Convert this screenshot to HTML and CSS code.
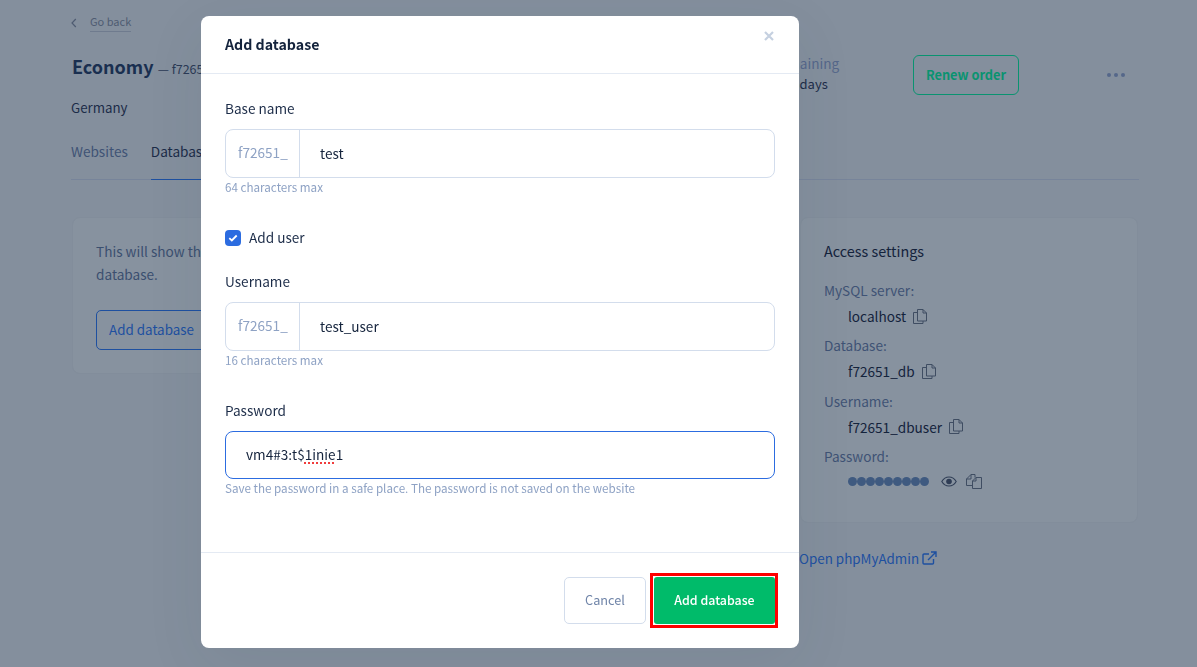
FILE: index.html
```html
<!DOCTYPE html>
<html lang="en">
<head>
<meta charset="utf-8">
<title>Add database</title>
<link rel="stylesheet" href="styles.css">
</head>
<body>
<div class="page">
  <a class="back"><svg class="back-icon" width="6" height="10" viewBox="0 0 6 10"><path d="M4.800 1 1 5l3.800 4" fill="none" stroke="#4f5c72" stroke-width="1.200"/></svg><span class="back-text">Go back</span></a>
  <header class="head">
    <div class="head-main">
      <h1 class="title">Economy <small class="title-sub">— f72651.hosting</small></h1>
      <div class="location">Germany</div>
    </div>
    <div class="remaining"><div class="remaining-label">Days remaining</div><div class="remaining-value">128 days</div></div>
    <button class="renew">Renew order</button>
    <div class="dots"><i></i><i></i><i></i></div>
  </header>
  <nav class="tabs"><span class="tab">Websites</span><span class="tab tab-active">Databases</span></nav>
  <div class="columns">
    <section class="card card-left">
      <p class="card-text">This will show the list of your databases. You have not created any<br>database.</p>
      <button class="outline-btn">Add database</button>
    </section>
    <aside class="side">
      <section class="card card-right">
        <h2 class="access-title">Access settings</h2>
        <div class="k">MySQL server:</div>
        <div class="v">localhost <svg class="copy" width="14" height="15" viewBox="0 0 14 15"><path d="M4.500 .5h5.500l3.500 3.500v8h-9zM10 .5V4h3.500M4.500 3.500H.5v11h9.500V12" fill="none" stroke="#3f4d62" stroke-width="1"/></svg></div>
        <div class="k">Database:</div>
        <div class="v">f72651_db <svg class="copy" width="14" height="15" viewBox="0 0 14 15"><path d="M4.500 .5h5.500l3.500 3.500v8h-9zM10 .5V4h3.500M4.500 3.500H.5v11h9.500V12" fill="none" stroke="#3f4d62" stroke-width="1"/></svg></div>
        <div class="k">Username:</div>
        <div class="v">f72651_dbuser <svg class="copy" width="14" height="15" viewBox="0 0 14 15"><path d="M4.500 .5h5.500l3.500 3.500v8h-9zM10 .5V4h3.500M4.500 3.500H.5v11h9.500V12" fill="none" stroke="#3f4d62" stroke-width="1"/></svg></div>
        <div class="k">Password:</div>
        <div class="v v-pass"><span class="pass-dots"><i></i><i></i><i></i><i></i><i></i><i></i><i></i><i></i><i></i></span>
          <svg class="eye" width="16" height="11" viewBox="0 0 16 11"><path d="M.8 5.500C2.500 2.500 5 1 8 1s5.500 1.500 7.200 4.500C13.500 8.500 11 10 8 10S2.500 8.500.8 5.500z" fill="none" stroke="#2f3d55" stroke-width="1.100"/><circle cx="8" cy="5.500" r="2.800" fill="#2f3d55"/></svg>
          <svg class="copy2" width="16" height="15" viewBox="0 0 16 15"><path d="M5 .5h4v3M5 .5.5 5v6.500h6M.5 5H5V.5M10 3.500 6.500 7v7.500h9v-11zM6.500 7H10V3.500" fill="none" stroke="#3f4d62" stroke-width="1"/></svg>
        </div>
      </section>
      <a class="pma">Open phpMyAdmin <svg width="15" height="14" viewBox="0 0 15 14"><path d="M11.500 8v4a1 1 0 0 1-1 1H2a1 1 0 0 1-1-1V4a1 1 0 0 1 1-1h5M6 9l7.500-7.500M9 1h5v5" fill="none" stroke="#1e50a0" stroke-width="1.400"/></svg></a>
    </aside>
  </div>
</div>

<div class="overlay">
  <div class="modal">
    <div class="modal-head"><h3 class="modal-title">Add database</h3><svg class="close" width="10" height="10" viewBox="0 0 10 10"><path d="M1 1l8 8M9 1 1 9" fill="none" stroke="#c5d0e0" stroke-width="2.200"/></svg></div>
    <div class="modal-body">
      <div class="label">Base name</div>
      <div class="field"><span class="prefix">f72651_</span><span class="value">test</span></div>
      <div class="hint">64 characters max</div>
      <label class="check"><span class="box"><svg width="10" height="8" viewBox="0 0 10 8"><path d="M1.300 4.200 3.800 6.500 8.700 1.500" fill="none" stroke="#fff" stroke-width="1.800"/></svg></span><span class="check-text">Add user</span></label>
      <div class="label">Username</div>
      <div class="field"><span class="prefix">f72651_</span><span class="value">test_user</span></div>
      <div class="hint">16 characters max</div>
      <div class="label label-pass">Password</div>
      <div class="field field-focus"><span class="value value-pass">vm4#3:t$<span class="typo">1inie</span>1</span></div>
      <div class="hint">Save the password in a safe place. The password is not saved on the website</div>
    </div>
    <div class="modal-foot">
      <button class="cancel">Cancel</button>
      <button class="submit">Add database</button>
    </div>
  </div>
</div>
</body>
</html>
```
FILE: styles.css
```css
* { box-sizing: border-box; }
html, body { margin: 0; height: 100%; overflow: hidden; }
body {
  background: #848f9d;
  font-family: "Noto Sans CJK SC", "Noto Sans", sans-serif;
  font-size: 13.6px;
  line-height: 20px;
  color: #1a2b47;
}
button { font: inherit; background: none; cursor: pointer; }

.page { padding: 13px 58px 0 71px; }
.back { display: flex; align-items: center; height: 19px; color: #4f5c72; font-size: 11px; }
.back-icon { margin-right: 13px; }
.back-text { border-bottom: 1px solid #6f7b8e; line-height: 17px; height: 19px; }

.head { display: flex; align-items: flex-start; margin-top: 23px; height: 76px; }
.head-main { width: 670px; padding-left: 1px; }
.title { margin: -1px 0 0; font-size: 18px; line-height: 24px; font-weight: 700; color: #1a2f50; }
.title-sub { font-size: 12.500px; font-weight: 400; color: #2b3a55; }
.location { margin: 17px 0 0 -1px; font-size: 13.300px; color: #1c2c48; }
.remaining { width: 172px; margin-top: -2px; }
.remaining-label { color: #55678a; line-height: 20px; }
.remaining-value { margin-top: 1px; padding-left: 34px; font-size: 13px; color: #1c2c48; }
.renew {
  width: 106px; height: 40px; padding: 0; border: 1px solid #0a9370; border-radius: 6px;
  color: #0a9370; font-weight: 600; font-size: 12.800px;
}
.dots { display: flex; gap: 3px; margin: 18px 0 0 88px; }
.dots i { width: 4px; height: 4px; border-radius: 50%; background: #55678a; }

.tabs { display: flex; gap: 23px; height: 45px; margin-top: 4px; border-bottom: 1px solid #77849a; }
.tab { color: #3f5375; height: 45px; padding-top: 6px; }
.tab-active { color: #1c2c48; border-bottom: 1px solid #1e50a0; }

.columns { display: flex; gap: 23px; margin-top: 37px; margin-left: 1px; align-items: flex-start; }
.card {
  background: #87929f;
  border: 1px solid #828d9b;
  border-radius: 8px;
}
.card-left { width: 705px; height: 157px; padding: 22px 23px; }
.card-text { margin: 0; line-height: 23px; color: #3b4f6f; }
.outline-btn {
  display: block; margin-top: 24px; width: 130px; height: 40px; text-align: left; padding: 0 12px 2px;
  border: 1px solid #1e50a0; border-radius: 5px; color: #1e50a0; font-size: 13.400px;
}
.side { width: 338px; }
.card-right { height: 306px; padding: 22px 23px; }
.access-title { margin: 0 0 18px; font-size: 14.400px; line-height: 22px; font-weight: 400; color: #14233c; }
.k { color: #3f5375; line-height: 20px; }
.v { display: flex; align-items: center; gap: 7px; height: 20px; margin: 6px 0 9.300px 24px; color: #14233c; }
.v-pass { gap: 10px; }
.pass-dots { display: flex; margin-right: 2px; }
.pass-dots i { width: 9px; height: 9px; border-radius: 50%; background: #3f5a80; }
.copy2 { margin-left: -1px; }
.pma { display: flex; align-items: center; gap: 3px; margin: 25px 0 0 -1px; font-size: 13.400px; color: #1e50a0; }

.overlay { position: fixed; inset: 0; padding: 16px 0 0 201px; }
.modal {
  width: 598px; height: 632px; display: flex; flex-direction: column;
  background: #fff; border-radius: 8px;
  box-shadow: 0 16px 60px rgba(40, 60, 80, .08);
}
.modal-head {
  display: flex; justify-content: space-between; align-items: flex-start;
  height: 58px; padding: 17px 25px 0 24px; border-bottom: 1px solid #e4eaf3;
}
.modal-title { margin: 0; font-size: 14.200px; line-height: 22px; font-weight: 600; color: #14233c; }
.close { margin-top: -2px; }
.modal-body { flex: 1; padding: 24px 24px 0; }
.label { line-height: 20px; color: #1c2c48; margin-bottom: 11px; }
.field { display: flex; align-items: center; height: 49px; border: 1px solid #d3ddec; border-radius: 8px; }
.prefix { width: 74px; height: 100%; padding-left: 12px; line-height: 45px; color: #8ea2c4; border-right: 1px solid #d3ddec; }
.value { padding: 0 0 2px 20px; color: #14233c; }
.field-focus { height: 48px; border-color: #2c6ce0; }
.typo { text-decoration: underline dotted #f03c3c 2px; text-underline-offset: 2px; }
.hint { font-size: 11.650px; line-height: 18px; color: #8ea2c4; }
.check { display: flex; align-items: center; gap: 8px; height: 20px; margin: 32px 0 23px; color: #1c2c48; }
.check-text { margin-top: -2px; }
.box { display: flex; align-items: center; justify-content: center; width: 16px; height: 16px; border-radius: 4px; background: #2c6ce0; }
.label-pass { margin-top: 31px; }
.modal-foot {
  display: flex; justify-content: flex-end; gap: 8px; height: 96px; padding: 24px 24px 0;
  border-top: 1px solid #e4eaf3;
}
.cancel { width: 82px; height: 47px; padding: 0 0 2px; border: 1px solid #d3ddec; border-radius: 5px; color: #6f84a8; font-size: 12.700px; }
.submit { position: relative; width: 121px; height: 47px; padding: 0 0 2px; border: 0; border-radius: 3px; background: #00bb6a; color: #fff; font-size: 12.400px; font-weight: 500; }
.submit::after { content: ""; position: absolute; inset: -4px -3px -4px -4px; border: 3px solid #f00; }
```
